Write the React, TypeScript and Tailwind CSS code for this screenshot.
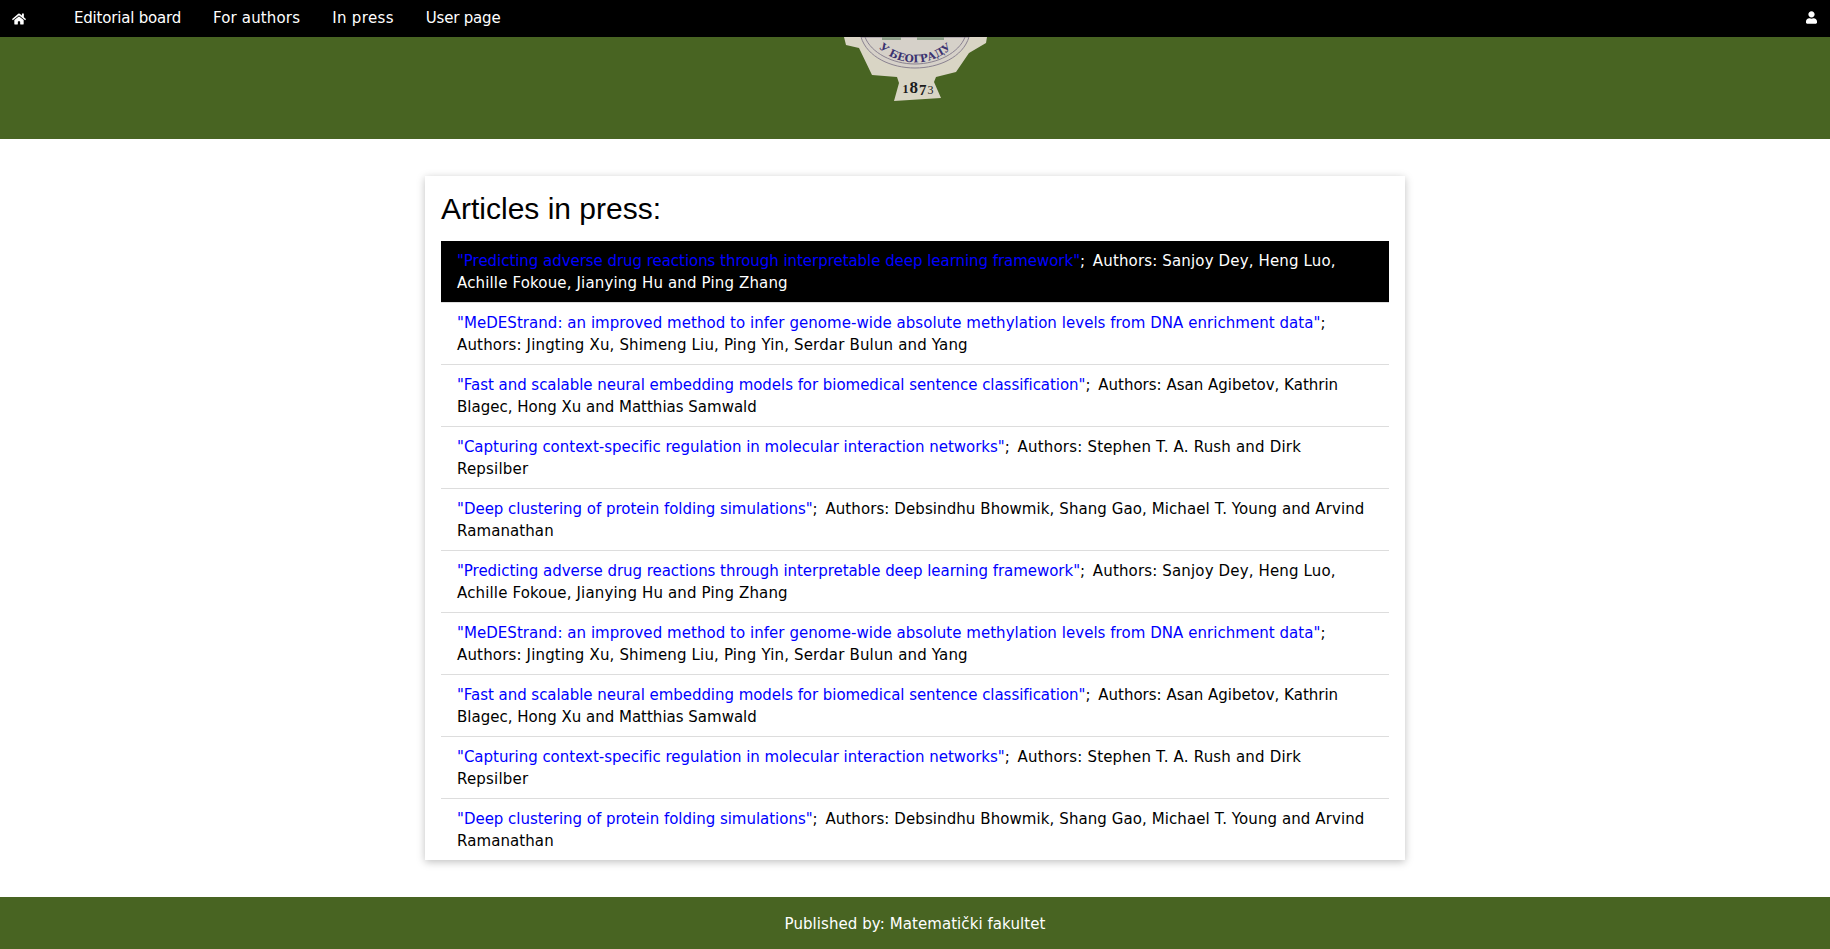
import { FaHome, FaUser } from "react-icons/fa";

interface Article {
  title: string;
  authors: string;
  titleClass: string;
  authorsClass: string;
}

const navLinks = [
  { label: "Editorial board", className: "tracking-[-0.2px]" },
  { label: "For authors", className: "tracking-[0.15px]" },
  { label: "In press", className: "tracking-[0.35px]" },
  { label: "User page", className: "tracking-[-0.2px]" },
];

const articles: Article[] = [
  {
    title: "Predicting adverse drug reactions through interpretable deep learning framework",
    authors: "Sanjoy Dey, Heng Luo, Achille Fokoue, Jianying Hu and Ping Zhang",
    titleClass: "tracking-[-0.044px]",
    authorsClass: "tracking-[0.15px]",
  },
  {
    title: "MeDEStrand: an improved method to infer genome-wide absolute methylation levels from DNA enrichment data",
    authors: "Jingting Xu, Shimeng Liu, Ping Yin, Serdar Bulun and Yang",
    titleClass: "tracking-[0.045px]",
    authorsClass: "tracking-[0.16px]",
  },
  {
    title: "Fast and scalable neural embedding models for biomedical sentence classification",
    authors: "Asan Agibetov, Kathrin Blagec, Hong Xu and Matthias Samwald",
    titleClass: "tracking-[-0.044px]",
    authorsClass: "",
  },
  {
    title: "Capturing context-specific regulation in molecular interaction networks",
    authors: "Stephen T. A. Rush and Dirk Repsilber",
    titleClass: "tracking-[-0.02px]",
    authorsClass: "tracking-[0.19px]",
  },
  {
    title: "Deep clustering of protein folding simulations",
    authors: "Debsindhu Bhowmik, Shang Gao, Michael T. Young and Arvind Ramanathan",
    titleClass: "tracking-[-0.02px]",
    authorsClass: "tracking-[0.085px]",
  },
];

const rows = [...articles, ...articles];

const Seal = () => (
  <svg width="148" height="65" viewBox="0 0 148 65" className="block">
    <path
      d="M3 0 L5 8 L18 11 L31 38 L56 40 L58 46 L53 64 L100 61 L93 45 L95 40 L115 35 L128 16 L145 6 L146 0 Z"
      fill="#d9d5c5"
    />
    <path d="M20 0 C26 20 50 31 74 31 C98 31 122 20 128 0 Z" fill="#d6d1c9" stroke="#8a8290" strokeWidth="1" />
    <path d="M24 0 C30 16 52 27 74 27 C96 27 118 16 124 0" fill="none" stroke="#8a8290" strokeWidth="1" />
    <rect x="41" y="0" width="19" height="3" fill="#8fa08a" />
    <rect x="76" y="0" width="27" height="3" fill="#8fa08a" />
    <path id="seal-arc" d="M30 2 A53 53 0 0 0 118 2" fill="none" />
    <text fontSize="10.5" fontWeight="700" fill="#3b3270" fontFamily="'DejaVu Serif', serif" textAnchor="middle">
      <textPath href="#seal-arc" startOffset="50%">
        У БЕОГРАДУ
      </textPath>
    </text>
    <text x="77" y="56" textAnchor="middle" fontWeight="700" fill="#1c1c1c" fontFamily="'Liberation Serif', serif">
      <tspan fontSize="12">1</tspan>
      <tspan fontSize="17" dx="1">8</tspan>
      <tspan fontSize="15" dy="2" dx="1">7</tspan>
      <tspan fontSize="12" dy="-1" dx="1" fontWeight="400">3</tspan>
    </text>
  </svg>
);

const App = () => {
  return (
    <div className="min-h-[949px] flex flex-col bg-white text-[15px] leading-[22px] text-black font-['DejaVu_Sans',sans-serif]">
      <nav className="h-[37px] bg-black text-white flex items-center pl-3 pr-[13px]">
        <FaHome className="w-[14px] h-[14px]" />
        <div className="flex ml-[48px] gap-8 pb-[1px]">
          {navLinks.map((link) => (
            <a key={link.label} className={link.className}>
              {link.label}
            </a>
          ))}
        </div>
        <FaUser className="w-[11px] h-[13px] ml-auto -mt-[2px]" />
      </nav>

      <header className="h-[102px] bg-[#486422] flex justify-center">
        <Seal />
      </header>

      <main className="flex-1 py-[37px]">
        <div className="w-[980px] mx-auto bg-white px-4 shadow-[0_2px_8px_rgba(0,0,0,0.25)]">
          <h2 className="h-[65px] flex items-center pt-[1px] text-[30px] font-['Liberation_Sans',sans-serif]">
            Articles in press:
          </h2>
          <ul>
            {rows.map((article, i) => (
              <li
                key={i}
                className={
                  i === 0
                    ? "bg-black text-white px-4 pt-[9px] pb-2 border-b border-[#dddddd]"
                    : "px-4 pt-[9px] pb-2 border-b border-[#dddddd] last:border-b-0"
                }
              >
                <a className={`text-[#0000ff] ${article.titleClass}`}>"{article.title}"</a>
                <span className="mr-[3px]">;</span>{" "}
                <span className={article.authorsClass}>Authors: {article.authors}</span>
              </li>
            ))}
          </ul>
        </div>
      </main>

      <footer className="h-[52px] bg-[#486422] text-white flex items-center justify-center pt-[1px] tracking-[0.07px]">
        Published by: Matematički fakultet
      </footer>
    </div>
  );
};

export default App;
